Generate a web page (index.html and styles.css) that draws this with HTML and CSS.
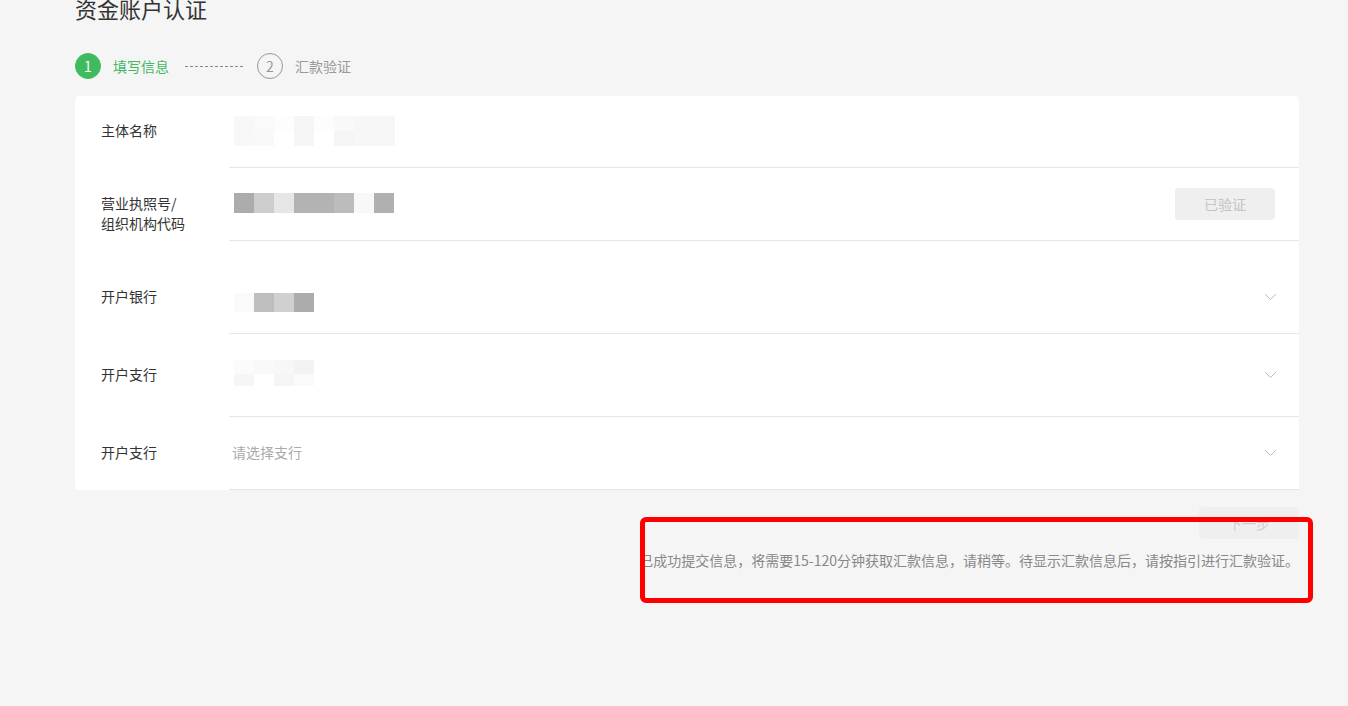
FILE: index.html
```html
<!DOCTYPE html>
<html lang="zh">
<head>
    <meta charset="UTF-8">
    <title>资金账户认证</title>
    <link rel="stylesheet" href="styles.css">
</head>
<body>
    <div class="page">
        <h2 class="title">资金账户认证</h2>

        <div class="steps">
            <span class="step-num active">1</span>
            <span class="step-text active">填写信息</span>
            <span class="step-line"></span>
            <span class="step-num">2</span>
            <span class="step-text">汇款验证</span>
        </div>

        <div class="card">
            <div class="row row-first">
                <div class="label">主体名称</div>
                <div class="field">
                    <span class="mosaic mosaic-name"></span>
                </div>
            </div>
            <div class="row">
                <div class="label label-two">营业执照号/<br>组织机构代码</div>
                <div class="field">
                    <span class="mosaic mosaic-license"></span>
                    <button class="btn-verified">已验证</button>
                </div>
            </div>
            <div class="row row-bank">
                <div class="label">开户银行</div>
                <div class="field">
                    <span class="mosaic mosaic-bank"></span>
                    <svg class="arrow" width="13" height="8" viewBox="0 0 13 8"><polyline points="1,1 6.5,6.5 12,1" fill="none" stroke="#bbb" stroke-width="1"/></svg>
                </div>
            </div>
            <div class="row row-branch">
                <div class="label">开户支行</div>
                <div class="field">
                    <span class="mosaic mosaic-branch"></span>
                    <svg class="arrow" width="13" height="8" viewBox="0 0 13 8"><polyline points="1,1 6.5,6.5 12,1" fill="none" stroke="#bbb" stroke-width="1"/></svg>
                </div>
            </div>
            <div class="row">
                <div class="label">开户支行</div>
                <div class="field">
                    <span class="placeholder">请选择支行</span>
                    <svg class="arrow" width="13" height="8" viewBox="0 0 13 8"><polyline points="1,1 6.5,6.5 12,1" fill="none" stroke="#bbb" stroke-width="1"/></svg>
                </div>
            </div>
        </div>

        <div class="actions">
            <button class="btn-next">下一步</button>
        </div>
        <p class="tip">已成功提交信息，将需要15-120分钟获取汇款信息，请稍等。待显示汇款信息后，请按指引进行汇款验证。</p>
    </div>

    <!-- 截图上的红色标注框 -->
    <div class="mark"></div>
</body>
</html>
```

FILE: styles.css
```css
body {
    margin: 0;
    background-color: #f5f5f5;
    font-family: "Noto Sans CJK SC", "Noto Sans", sans-serif;
    color: #333;
    height: 706px;
    overflow: hidden;
}

.page {
    padding: 0 49px 0 75px;
}

.title {
    margin: -4px 0 0;
    font-size: 22px;
    line-height: 24px;
    font-weight: normal;
    color: #333;
}

/* 步骤条 */
.steps {
    display: flex;
    align-items: center;
    height: 26px;
    margin-top: 33px;
}

.step-num {
    width: 24px;
    height: 24px;
    border: 1px solid #999;
    border-radius: 50%;
    display: flex;
    align-items: center;
    justify-content: center;
    font-size: 14px;
    color: #999;
}

.step-num.active {
    background-color: #3fba5f;
    border-color: #3fba5f;
    color: #fff;
}

.step-text {
    margin-left: 12px;
    font-size: 14px;
    color: #999;
}

.step-text.active {
    color: #44b864;
}

.step-line {
    width: 58px;
    border-top: 1px dashed #888;
    margin: 0 14px 0 16px;
}

/* 表单卡片 */
.card {
    margin-top: 17px;
    background-color: #fff;
    border-radius: 4px;
}

.row {
    display: flex;
}

.label {
    width: 128px;
    padding-left: 26px;
    padding-bottom: 4px;
    display: flex;
    align-items: center;
    font-size: 14px;
    line-height: 20px;
    color: #333;
}

.label-two {
    padding-top: 20px;
}

.field {
    flex: 1;
    height: 72px;
    border-bottom: 1px solid #e6e6e6;
    display: flex;
    align-items: center;
    padding: 0 22px 0 3px;
}

.row-first .field {
    height: 71px;
}

.row-bank .label,
.row-bank .field {
    padding-top: 20px;
}

.row-branch .field {
    height: 82px;
}

.placeholder {
    font-size: 14px;
    color: #aaa;
    margin-bottom: 2px;
}

.arrow {
    margin-left: auto;
}

/* 打码的信息 */
.mosaic {
    display: block;
    margin-left: 2px;
}

.mosaic-name {
    width: 161px;
    height: 30px;
    background:
        linear-gradient(to right, #f8f8f8 0 20px, #fafafa 20px 40px, #fdfdfd 40px 60px, #f6f6f6 60px 80px, #fdfdfd 80px 100px, #f9f9f9 100px 120px, #f7f7f7 120px 161px) top / 100% 15px no-repeat,
        linear-gradient(to right, #f8f8f8 0 20px, #f9f9f9 20px 40px, #fff 40px 60px, #f6f6f6 60px 80px, #fff 80px 100px, #f5f5f5 100px 120px, #f7f7f7 120px 161px) bottom / 100% 15px no-repeat;
    margin-bottom: 2px;
}

.mosaic-license {
    width: 160px;
    height: 20px;
    margin-top: -3px;
    background: linear-gradient(to right, #acacac 0 20px, #cdcdcd 20px 40px, #e6e6e6 40px 60px, #b3b3b3 60px 80px, #b3b3b3 80px 100px, #bcbcbc 100px 120px, #f8f8f8 120px 140px, #b0b0b0 140px 160px);
}

.mosaic-bank {
    width: 80px;
    height: 19px;
    margin-top: 10px;
    background: linear-gradient(to right, #fafafa 0 20px, #bebebe 20px 40px, #d0d0d0 40px 60px, #acacac 60px 80px);
}

.mosaic-branch {
    width: 80px;
    height: 26px;
    margin-top: -4px;
    background:
        linear-gradient(to right, #fbfbfb 0 20px, #f9f9f9 20px 40px, #f7f7f7 40px 60px, #f3f3f3 60px 80px) top / 100% 14px no-repeat,
        linear-gradient(to right, #f6f6f6 0 20px, #fff 20px 40px, #f5f5f5 40px 60px, #fafafa 60px 80px) bottom / 100% 12px no-repeat;
}

.btn-verified {
    margin-left: auto;
    margin-right: 2px;
    width: 100px;
    height: 32px;
    border: none;
    border-radius: 4px;
    background-color: #efefef;
    color: #c4c4c4;
    font-size: 14px;
    font-family: inherit;
}

/* 底部 */
.actions {
    display: flex;
    justify-content: flex-end;
    margin-top: 17px;
}

.btn-next {
    width: 100px;
    height: 32px;
    border: none;
    border-radius: 4px;
    background-color: #efefef;
    color: #cfcfcf;
    font-size: 14px;
    font-family: inherit;
}

.tip {
    margin: 11px 0 0;
    text-align: right;
    font-size: 14px;
    line-height: 20px;
    color: #888;
    white-space: nowrap;
}

.mark {
    position: absolute;
    left: 640px;
    top: 517px;
    width: 663px;
    height: 76px;
    border: 5px solid #ff0000;
    border-radius: 6px;
}
```
